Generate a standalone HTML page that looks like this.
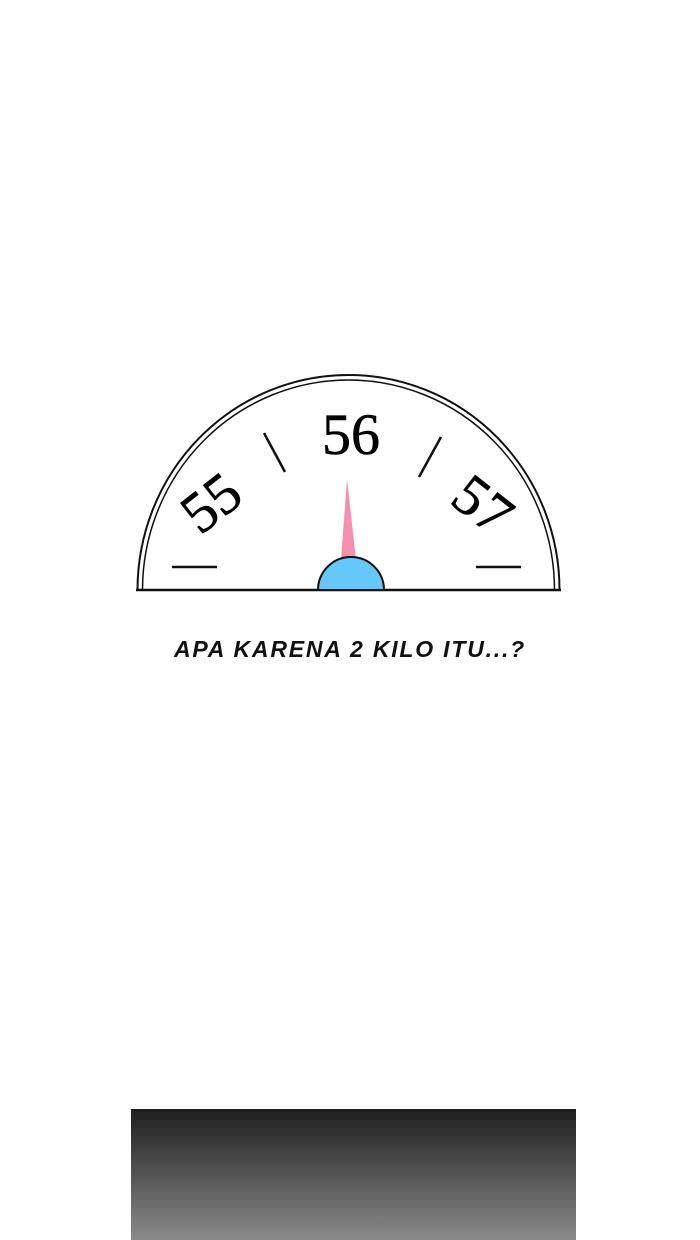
<!DOCTYPE html>
<html><head><meta charset="utf-8"><style>
html,body{margin:0;padding:0;background:#fff;width:700px;height:1240px;overflow:hidden;position:relative}
.box{position:absolute;left:131px;top:1109px;width:445px;height:131px;background:linear-gradient(#1e1e1e,#8a8a8a)}
</style></head><body>
<svg width="700" height="700" style="position:absolute;left:0;top:0">
<path d="M137.5 590 A211 215 0 0 1 559.5 590" fill="none" stroke="#111" stroke-width="2"/>
<path d="M142.5 590 A206 210 0 0 1 554.5 590" fill="none" stroke="#111" stroke-width="1.5"/>
<line x1="136" y1="590" x2="561" y2="590" stroke="#111" stroke-width="2.5"/>
<line x1="172" y1="567" x2="217" y2="567" stroke="#111" stroke-width="2.5"/>
<line x1="476" y1="567" x2="521" y2="567" stroke="#111" stroke-width="2.5"/>
<line x1="264" y1="433" x2="285" y2="472" stroke="#111" stroke-width="2.5"/>
<line x1="441" y1="437" x2="419" y2="477" stroke="#111" stroke-width="2.5"/>
<polygon points="347,479 341,560 356,560" fill="#f58fab"/>
<path d="M318 590 A32 32 0 0 1 384 590 Z" fill="#66c7fa" stroke="#111" stroke-width="2"/>
<g font-family="Liberation Serif, serif" font-size="58" fill="#000" text-anchor="middle" stroke="#000" stroke-width="0.6">
<text x="351" y="454">56</text>
<text x="0" y="0" transform="translate(223,518) rotate(-38)">55</text>
<text x="0" y="0" transform="translate(471,520) rotate(38)">57</text>
</g>
<text x="350" y="657" text-anchor="middle" font-family="Liberation Sans, sans-serif" font-style="italic" font-weight="bold" font-size="23" letter-spacing="1.8" fill="#111">APA KARENA 2 KILO ITU...?</text>
</svg>
<div class="box"></div>
</body></html>
